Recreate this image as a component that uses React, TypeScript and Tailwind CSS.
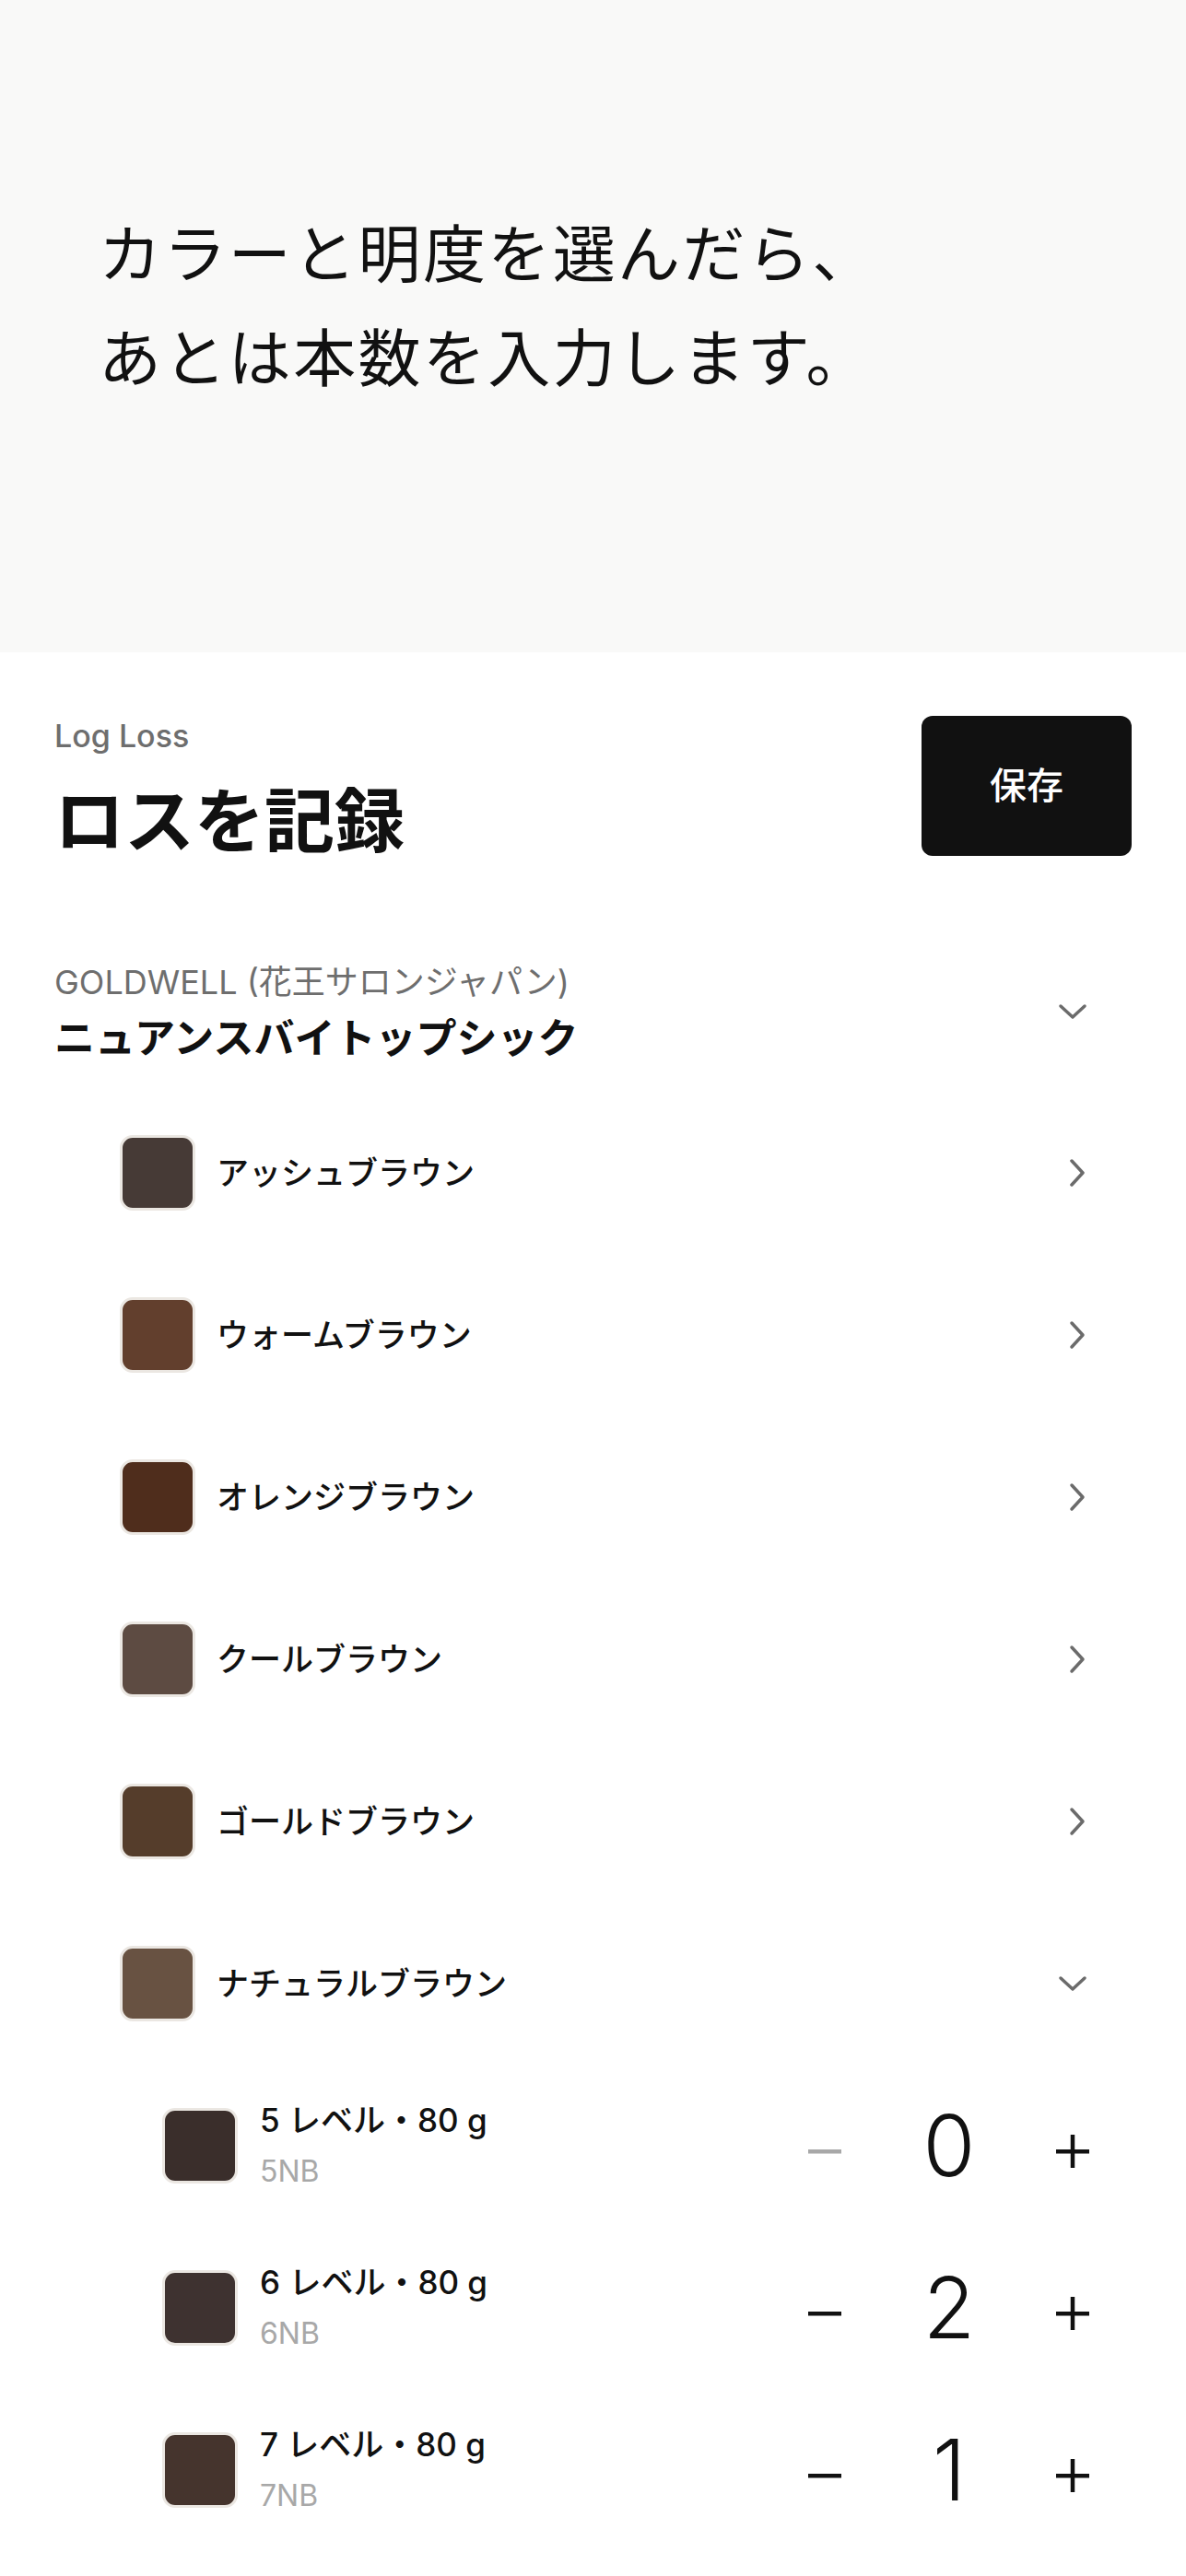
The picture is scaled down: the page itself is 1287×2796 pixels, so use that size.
import React from "react";

const FONT = "font-['Inter','Noto_Sans_CJK_JP',sans-serif]";

const colors = [
  { name: "アッシュブラウン", color: "#463a36" },
  { name: "ウォームブラウン", color: "#623f2d" },
  { name: "オレンジブラウン", color: "#4f2d1c" },
  { name: "クールブラウン", color: "#5d4b42" },
  { name: "ゴールドブラウン", color: "#553d2b" },
];

const levels = [
  { level: "5", code: "5NB", color: "#3a2e2b", count: 0 },
  { level: "6", code: "6NB", color: "#3e3230", count: 2 },
  { level: "7", code: "7NB", color: "#45342d", count: 1 },
];

function ChevronRight() {
  return (
    <svg className="ml-[10px]" width="20" height="32" viewBox="0 0 20 32" fill="none">
      <path d="M4 3 L16 16 L4 29" stroke="#6b6b6b" strokeWidth="3.5" strokeLinecap="round" strokeLinejoin="round" />
    </svg>
  );
}

function ChevronDown() {
  return (
    <svg width="32" height="20" viewBox="0 0 32 20" fill="none">
      <path d="M3 4 L16 16 L29 4" stroke="#6b6b6b" strokeWidth="3.5" strokeLinecap="round" strokeLinejoin="round" />
    </svg>
  );
}

function Swatch({ color }: { color: string }) {
  return (
    <div
      className="w-[82px] h-[82px] shrink-0 rounded-[14px] border-[3px] border-[#ebe7e2]"
      style={{ backgroundColor: color }}
    />
  );
}

function Minus({ muted }: { muted: boolean }) {
  return (
    <svg width="38" height="38" viewBox="0 0 38 38">
      <rect x="1" y="17" width="36" height="4.5" fill={muted ? "#a8a8a8" : "#111111"} />
    </svg>
  );
}

function Plus() {
  return (
    <svg width="38" height="38" viewBox="0 0 38 38">
      <rect x="1" y="17" width="36" height="4.5" fill="#111111" />
      <rect x="16.75" y="1" width="4.5" height="36" fill="#111111" />
    </svg>
  );
}

export default function App() {
  return (
    <div className={`${FONT} bg-white text-[#111] min-h-[2796px]`}>
      <section className="bg-[#f9f9f8] h-[708px] pt-[220px] pl-[107px]">
        <p className="text-[68px] leading-[113px] tracking-[0.035em] font-normal text-[#111]">
          カラーと明度を選んだら、
          <br />
          あとは本数を入力します。
        </p>
      </section>

      <section className="px-[59px]">
        <div className="flex justify-between items-start pt-[69px]">
          <div className="pt-[2px]">
            <div className="text-[34px] leading-[40px] text-[#6e6e6e] font-medium">Log Loss</div>
            <h1 className="mt-[27px] text-[76px] leading-[90px] font-bold text-[#111]">ロスを記録</h1>
          </div>
          <button className="w-[228px] h-[152px] rounded-[12px] bg-[#111] text-white text-[40px] font-medium">
            保存
          </button>
        </div>

        <div className="mt-[108px] flex items-center pr-[44px]">
          <div className="flex-1">
            <div className="text-[36px] leading-[44px] text-[#6e6e6e]">GOLDWELL (花王サロンジャパン)</div>
            <div className="mt-[14px] text-[44px] leading-[50px] font-bold text-[#111]">ニュアンスバイトップシック</div>
          </div>
          <div className="w-[40px] flex justify-center">
            <ChevronDown />
          </div>
        </div>

        <div className="mt-[33px]">
          {colors.map((c) => (
            <div key={c.name} className="flex items-center h-[176px] pl-[71px] pr-[44px]">
              <Swatch color={c.color} />
              <div className="ml-[23px] flex-1 text-[35px] leading-[44px] font-medium text-[#111]">{c.name}</div>
              <div className="w-[40px] flex justify-center">
                <ChevronRight />
              </div>
            </div>
          ))}

          <div className="flex items-center h-[176px] pl-[71px] pr-[44px]">
            <Swatch color="#685242" />
            <div className="ml-[23px] flex-1 text-[35px] leading-[44px] font-medium text-[#111]">ナチュラルブラウン</div>
            <div className="w-[40px] flex justify-center">
              <ChevronDown />
            </div>
          </div>

          {levels.map((l) => (
            <div key={l.code} className="flex items-center h-[176px] pl-[117px] pr-[44px]">
              <Swatch color={l.color} />
              <div className="ml-[24px] flex-1 flex flex-col gap-[16px]">
                <div className="text-[35px] leading-[40px] font-medium text-[#111]">
                  {l.level} レベル・80 g
                </div>
                <div className="text-[32px] leading-[40px] text-[#a8a8a8]">{l.code}</div>
              </div>
              <div className="flex items-center">
                <div className="w-[40px] flex justify-center mt-[12px]">
                  <Minus muted={l.count === 0} />
                </div>
                <div className="ml-[55px] w-[120px] text-center text-[92px] leading-[100px] font-light text-[#111]">
                  {l.count}
                </div>
                <div className="ml-[54px] w-[40px] flex justify-center mt-[12px]">
                  <Plus />
                </div>
              </div>
            </div>
          ))}
        </div>
      </section>
    </div>
  );
}
